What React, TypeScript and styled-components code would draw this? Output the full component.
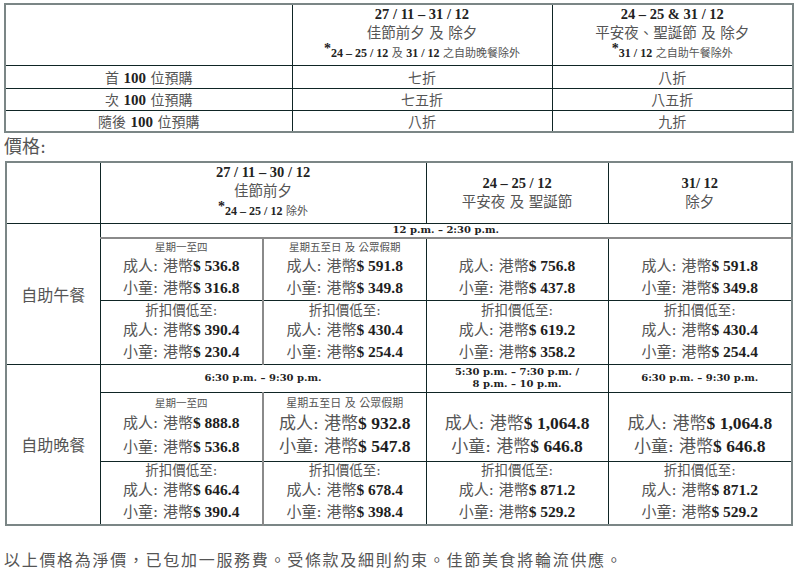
import React from "react";
import styled, { createGlobalStyle } from "styled-components";

const FONT = `"DejaVu Serif", "Noto Sans CJK TC", serif`;
const NUM_FONT = `"Liberation Serif", "Noto Sans CJK TC", serif`;

const GlobalStyle = createGlobalStyle`
  html, body { margin: 0; padding: 0; background: #ffffff; }
  body { font-family: ${FONT}; color: #555555; }
`;

const Page = styled.div`
  width: 800px;
  height: 573px;
  box-sizing: border-box;
  padding: 3px 8px 0 4px;
  display: flex;
  flex-direction: column;
  overflow: hidden;
`;

const Grid = styled.table<{ $width: number; $shift?: number }>`
  width: ${(p) => p.$width}px;
  margin-left: ${(p) => p.$shift ?? 0}px;
  border-collapse: collapse;
  table-layout: fixed;
  border: 2px solid #7b8686;
`;

const Row = styled.tr<{ $h: number }>`
  height: ${(p) => p.$h}px;
`;

const Cell = styled.td<{ $grayRight?: boolean; $grayBottom?: boolean }>`
  border: 1px solid #0f2525;
  ${(p) => (p.$grayRight ? "border-right: 2px solid #8a8a8a;" : "")}
  ${(p) => (p.$grayBottom ? "border-bottom: 2px solid #8a8a8a;" : "")}
  padding: 0;
  text-align: center;
  vertical-align: middle;
`;

const DateLine = styled.div`
  font-family: ${NUM_FONT};
  font-size: 14.5px;
  line-height: 18px;
  font-weight: bold;
  color: #222222;
`;

const TitleLine = styled.div`
  font-size: 14.5px;
  line-height: 20px;
  color: #555555;
`;

const NoteLine = styled.div`
  font-size: 11px;
  line-height: 20px;
  color: #555555;
`;

const Star = styled.span`
  font-family: ${NUM_FONT};
  font-size: 14px;
  font-weight: bold;
  color: #222222;
  position: relative;
  top: -4px;
`;

const NoteNum = styled.span`
  font-family: ${NUM_FONT};
  font-size: 12px;
  font-weight: bold;
  color: #222222;
`;

const RowLabel = styled.span`
  font-size: 14px;
  color: #555555;
`;

const RowNum = styled.span`
  font-family: ${NUM_FONT};
  font-size: 15px;
  font-weight: bold;
  color: #222222;
`;

const SectionTitle = styled.div`
  font-size: 18px;
  line-height: 28px;
  color: #555555;
`;

const MealName = styled.span`
  font-size: 16px;
  color: #555555;
`;

const TimeText = styled.div`
  font-size: 10px;
  line-height: 12px;
  font-weight: bold;
  color: #222222;
`;

const Block = styled.div<{ $lh: number; $size: number }>`
  line-height: ${(p) => p.$lh}px;
  font-size: ${(p) => p.$size}px;
  color: #555555;
`;

const Label = styled.div<{ $size: number; $lh: number }>`
  font-size: ${(p) => p.$size}px;
  line-height: ${(p) => p.$lh}px;
  min-height: ${(p) => p.$lh}px;
  color: #555555;
`;

const Amount = styled.span<{ $size: number }>`
  font-family: ${NUM_FONT};
  font-weight: bold;
  font-size: ${(p) => p.$size}px;
  color: #1e1e1e;
`;

const Footer = styled.div`
  margin-top: 23px;
  font-size: 16px;
  line-height: 24px;
  letter-spacing: 1.7px;
  color: #555555;
`;

type Price = { label: string; adult: string; child: string };

const lunchPrices: Price[] = [
  { label: "星期一至四", adult: "536.8", child: "316.8" },
  { label: "星期五至日 及 公眾假期", adult: "591.8", child: "349.8" },
  { label: "", adult: "756.8", child: "437.8" },
  { label: "", adult: "591.8", child: "349.8" },
];

const lunchDiscount: Price[] = [
  { label: "折扣價低至:", adult: "390.4", child: "230.4" },
  { label: "折扣價低至:", adult: "430.4", child: "254.4" },
  { label: "折扣價低至:", adult: "619.2", child: "358.2" },
  { label: "折扣價低至:", adult: "430.4", child: "254.4" },
];

const dinnerPrices: (Price & { big: boolean })[] = [
  { label: "星期一至四", adult: "888.8", child: "536.8", big: false },
  { label: "星期五至日 及 公眾假期", adult: "932.8", child: "547.8", big: true },
  { label: "", adult: "1,064.8", child: "646.8", big: true },
  { label: "", adult: "1,064.8", child: "646.8", big: true },
];

const dinnerDiscount: Price[] = [
  { label: "折扣價低至:", adult: "646.4", child: "390.4" },
  { label: "折扣價低至:", adult: "678.4", child: "398.4" },
  { label: "折扣價低至:", adult: "871.2", child: "529.2" },
  { label: "折扣價低至:", adult: "871.2", child: "529.2" },
];

function PriceBlock({
  p,
  lh,
  size,
  amount,
  labelSize,
  labelLh,
}: {
  p: Price;
  lh: number;
  size: number;
  amount: number;
  labelSize: number;
  labelLh: number;
}) {
  return (
    <Block $lh={lh} $size={size}>
      <Label $size={labelSize} $lh={labelLh}>
        {p.label || "\u00a0"}
      </Label>
      <div>
        成人: 港幣<Amount $size={amount}>$ {p.adult}</Amount>
      </div>
      <div>
        小童: 港幣<Amount $size={amount}>$ {p.child}</Amount>
      </div>
    </Block>
  );
}

const earlyBird = [
  { n: "首", rest: "位預購", a: "七折", b: "八折" },
  { n: "次", rest: "位預購", a: "七五折", b: "八五折" },
  { n: "隨後", rest: "位預購", a: "八折", b: "九折" },
];

export default function App() {
  return (
    <Page>
      <GlobalStyle />
      <Grid $width={788}>
        <colgroup>
          <col style={{ width: 287 }} />
          <col style={{ width: 260 }} />
          <col style={{ width: 241 }} />
        </colgroup>
        <tbody>
          <Row $h={61}>
            <Cell />
            <Cell>
              <DateLine>27 / 11 – 31 / 12</DateLine>
              <TitleLine>佳節前夕 及 除夕</TitleLine>
              <NoteLine>
                <Star>*</Star>
                <NoteNum>24 – 25 / 12</NoteNum> 及 <NoteNum>31 / 12</NoteNum>{" "}
                之自助晚餐除外
              </NoteLine>
            </Cell>
            <Cell>
              <DateLine>24 – 25 &amp; 31 / 12</DateLine>
              <TitleLine>平安夜、聖誕節 及 除夕</TitleLine>
              <NoteLine>
                <Star>*</Star>
                <NoteNum>31 / 12</NoteNum> 之自助午餐除外
              </NoteLine>
            </Cell>
          </Row>
          {earlyBird.map((r, i) => (
            <Row $h={i === 0 ? 23 : 22} key={r.n}>
              <Cell>
                <RowLabel>
                  {r.n} <RowNum>100</RowNum> {r.rest}
                </RowLabel>
              </Cell>
              <Cell>
                <RowLabel>{r.a}</RowLabel>
              </Cell>
              <Cell>
                <RowLabel>{r.b}</RowLabel>
              </Cell>
            </Row>
          ))}
        </tbody>
      </Grid>

      <SectionTitle>價格:</SectionTitle>

      <Grid $width={786} $shift={1}>
        <colgroup>
          <col style={{ width: 94 }} />
          <col style={{ width: 163 }} />
          <col style={{ width: 163 }} />
          <col style={{ width: 182 }} />
          <col style={{ width: 184 }} />
        </colgroup>
        <tbody>
          <Row $h={61}>
            <Cell />
            <Cell colSpan={2}>
              <DateLine>27 / 11 – 30 / 12</DateLine>
              <TitleLine>佳節前夕</TitleLine>
              <NoteLine>
                <Star>*</Star>
                <NoteNum>24 – 25 / 12</NoteNum> 除外
              </NoteLine>
            </Cell>
            <Cell>
              <DateLine>24 – 25 / 12</DateLine>
              <TitleLine>平安夜 及 聖誕節</TitleLine>
            </Cell>
            <Cell>
              <DateLine>31/ 12</DateLine>
              <TitleLine>除夕</TitleLine>
            </Cell>
          </Row>

          <Row $h={15}>
            <Cell rowSpan={3}>
              <MealName>自助午餐</MealName>
            </Cell>
            <Cell colSpan={4} $grayBottom>
              <TimeText>12 p.m. – 2:30 p.m.</TimeText>
            </Cell>
          </Row>
          <Row $h={62}>
            {lunchPrices.map((p, i) => (
              <Cell key={i} $grayRight={i === 0}>
                <PriceBlock p={p} lh={21} size={15} amount={15.5} labelSize={10.5} labelLh={15} />
              </Cell>
            ))}
          </Row>
          <Row $h={64}>
            {lunchDiscount.map((p, i) => (
              <Cell key={i} $grayRight={i === 0}>
                <PriceBlock p={p} lh={21} size={15} amount={15.5} labelSize={13.5} labelLh={17} />
              </Cell>
            ))}
          </Row>

          <Row $h={28}>
            <Cell rowSpan={3}>
              <MealName>自助晚餐</MealName>
            </Cell>
            <Cell colSpan={2}>
              <TimeText>6:30 p.m. – 9:30 p.m.</TimeText>
            </Cell>
            <Cell>
              <TimeText>
                5:30 p.m. – 7:30 p.m. /
                <br />8 p.m. – 10 p.m.
              </TimeText>
            </Cell>
            <Cell>
              <TimeText>6:30 p.m. – 9:30 p.m.</TimeText>
            </Cell>
          </Row>
          <Row $h={69}>
            {dinnerPrices.map((p, i) => (
              <Cell key={i} $grayRight={i === 0}>
                <PriceBlock
                  p={p}
                  lh={23}
                  size={p.big ? 17 : 15}
                  amount={p.big ? 17.5 : 15.5}
                  labelSize={i === 1 ? 11 : 10.5}
                  labelLh={16}
                />
              </Cell>
            ))}
          </Row>
          <Row $h={64}>
            {dinnerDiscount.map((p, i) => (
              <Cell key={i} $grayRight={i === 0}>
                <PriceBlock p={p} lh={21} size={15} amount={15.5} labelSize={13.5} labelLh={17} />
              </Cell>
            ))}
          </Row>
        </tbody>
      </Grid>

      <Footer>以上價格為淨價，已包加一服務費。受條款及細則約束。佳節美食將輪流供應。</Footer>
    </Page>
  );
}
